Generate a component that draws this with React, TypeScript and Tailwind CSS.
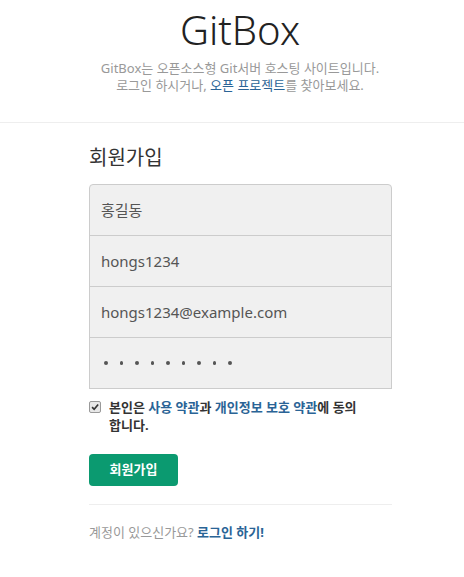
import React from "react";

const font = { fontFamily: '"Noto Sans", "Noto Sans CJK KR", sans-serif' };

export default function App() {
  return (
    <div className="min-h-[577px] bg-white text-[#333]" style={font}>
      <div className="pl-[16px] pt-[4px] pb-[28px] text-center">
        <h1 className="text-[40px] leading-[52px] font-light text-[#222]">GitBox</h1>
        <p className="mt-[4px] text-[13px] leading-[17px] text-[#999]">
          GitBox는 오픈소스형 Git서버 호스팅 사이트입니다.
          <br />
          로그인 하시거나, <a className="text-[#2a6496]">오픈 프로젝트</a>를 찾아보세요.
        </p>
      </div>
      <div className="h-px bg-[#eee]" />
      <div className="ml-[89px] w-[303px] pt-[21px]">
        <h2 className="text-[20px] leading-[28px] text-[#333]">회원가입</h2>
        <div className="mt-[12px] flex flex-col">
          <div className="h-[52px] rounded-t-[4px] border border-[#ccc] bg-[#f0f0f0] pl-[11px] flex items-center text-[15px] text-[#555]">홍길동</div>
          <div className="-mt-px h-[52px] border border-[#ccc] bg-[#f0f0f0] pl-[11px] flex items-center text-[15px] text-[#555]">hongs1234</div>
          <div className="-mt-px h-[52px] border border-[#ccc] bg-[#f0f0f0] pl-[11px] flex items-center text-[15px] text-[#555]">hongs1234@example.com</div>
          <div className="-mt-px h-[52px] border border-[#ccc] bg-[#f0f0f0] pl-[14px] flex items-center gap-[12px] text-[#555]">
            {Array.from({ length: 9 }).map((_, i) => (
              <span key={i} className="block h-[3.5px] w-[3.5px] rounded-full bg-[#555]" />
            ))}
          </div>
        </div>
        <div className="mt-[9px] flex items-start gap-[8px]">
          <span className="mt-[3px] flex h-[12px] w-[12px] shrink-0 items-center justify-center rounded-[2px] border border-[#999] bg-[#e8e8e8]">
            <svg viewBox="0 0 12 12" className="h-[10px] w-[10px]">
              <path d="M2.5 6.2 L5 8.8 L9.8 3" fill="none" stroke="#333" strokeWidth="2" />
            </svg>
          </span>
          <p className="text-[13px] leading-[18px] font-bold text-[#333]">
            본인은 <a className="text-[#2a6496]">사용 약관</a>과 <a className="text-[#2a6496]">개인정보 보호 약관</a>에 동의
            <br />
            합니다.
          </p>
        </div>
        <button className="mt-[20px] h-[32px] w-[89px] rounded-[4px] bg-[#0b9a70] text-[13px] font-bold text-white">
          회원가입
        </button>
        <div className="mt-[18px] h-px bg-[#eee]" />
        <p className="mt-[18px] text-[13px] leading-[18px] text-[#999]">
          계정이 있으신가요? <a className="font-bold text-[#2a6496]">로그인 하기!</a>
        </p>
      </div>
    </div>
  );
}
